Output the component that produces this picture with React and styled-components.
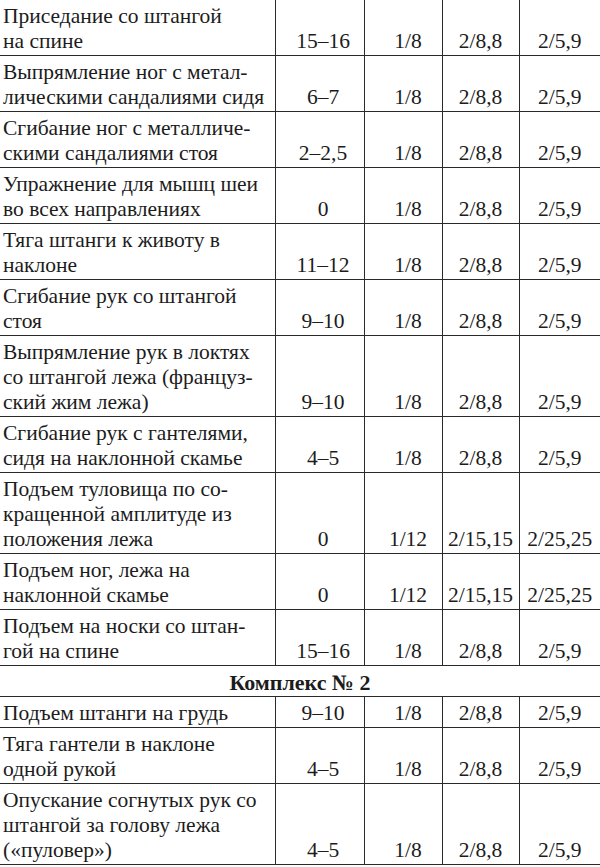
import React from "react";
import styled, { createGlobalStyle } from "styled-components";

const GlobalStyle = createGlobalStyle`
  html, body {
    margin: 0;
    padding: 0;
    background: #fff;
  }
  body {
    font-family: "Liberation Serif", "DejaVu Serif", serif;
    color: #1c1c1c;
  }
`;

const Table = styled.table`
  width: 600px;
  border-collapse: collapse;
  table-layout: fixed;
  font-size: 21.5px;
  line-height: 25px;
`;

const Col = styled.col`
  width: ${(p) => p.$w}px;
`;

const Row = styled.tr`
  border-bottom: 1px solid #2a2a2a;
`;

const NameCell = styled.td`
  padding: 4px 0 1px 3px;
  white-space: nowrap;
  vertical-align: top;
  border-right: 1px solid #2a2a2a;
`;

const NumCell = styled.td`
  padding: 4px 0 1px ${(p) => p.$shift || 0}px;
  text-align: center;
  white-space: nowrap;
  vertical-align: bottom;
  border-right: ${(p) => (p.$last ? "none" : "1px solid #2a2a2a")};
`;

const HeaderCell = styled.td`
  padding: 4px 0 1px;
  text-align: center;
  font-weight: bold;
  font-size: 22px;
`;

const rows1 = [
  [["Приседание со штангой", "на спине"], "15–16", "1/8", "2/8,8", "2/5,9"],
  [["Выпрямление ног с метал-", "лическими сандалиями сидя"], "6–7", "1/8", "2/8,8", "2/5,9"],
  [["Сгибание ног с металличе-", "скими сандалиями стоя"], "2–2,5", "1/8", "2/8,8", "2/5,9"],
  [["Упражнение для мышц шеи", "во всех направлениях"], "0", "1/8", "2/8,8", "2/5,9"],
  [["Тяга штанги к животу в", "наклоне"], "11–12", "1/8", "2/8,8", "2/5,9"],
  [["Сгибание рук со штангой", "стоя"], "9–10", "1/8", "2/8,8", "2/5,9"],
  [["Выпрямление рук в локтях", "со штангой лежа (француз-", "ский жим лежа)"], "9–10", "1/8", "2/8,8", "2/5,9"],
  [["Сгибание рук с гантелями,", "сидя на наклонной скамье"], "4–5", "1/8", "2/8,8", "2/5,9"],
  [["Подъем туловища по со-", "кращенной амплитуде из", "положения лежа"], "0", "1/12", "2/15,15", "2/25,25"],
  [["Подъем ног, лежа на", "наклонной скамье"], "0", "1/12", "2/15,15", "2/25,25"],
  [["Подъем на носки со штан-", "гой на спине"], "15–16", "1/8", "2/8,8", "2/5,9"],
];

const rows2 = [
  [["Подъем штанги на грудь"], "9–10", "1/8", "2/8,8", "2/5,9"],
  [["Тяга гантели в наклоне", "одной рукой"], "4–5", "1/8", "2/8,8", "2/5,9"],
  [["Опускание согнутых рук со", "штангой за голову лежа", "(«пуловер»)"], "4–5", "1/8", "2/8,8", "2/5,9"],
];

function ExerciseRow({ row }) {
  const [name, reps, a, b, c] = row;
  return (
    <Row>
      <NameCell>
        {name.map((line, i) => (
          <React.Fragment key={i}>
            {i > 0 && <br />}
            {line}
          </React.Fragment>
        ))}
      </NameCell>
      <NumCell $shift={7}>{reps}</NumCell>
      <NumCell $shift={10}>{a}</NumCell>
      <NumCell>{b}</NumCell>
      <NumCell $last>{c}</NumCell>
    </Row>
  );
}

export default function App() {
  return (
    <>
      <GlobalStyle />
      <Table>
        <colgroup>
          <Col $w={275} />
          <Col $w={89} />
          <Col $w={78} />
          <Col $w={77} />
          <Col $w={81} />
        </colgroup>
        <tbody>
          {rows1.map((r, i) => (
            <ExerciseRow key={i} row={r} />
          ))}
          <Row>
            <HeaderCell colSpan={5}>Комплекс № 2</HeaderCell>
          </Row>
          {rows2.map((r, i) => (
            <ExerciseRow key={i} row={r} />
          ))}
        </tbody>
      </Table>
    </>
  );
}
